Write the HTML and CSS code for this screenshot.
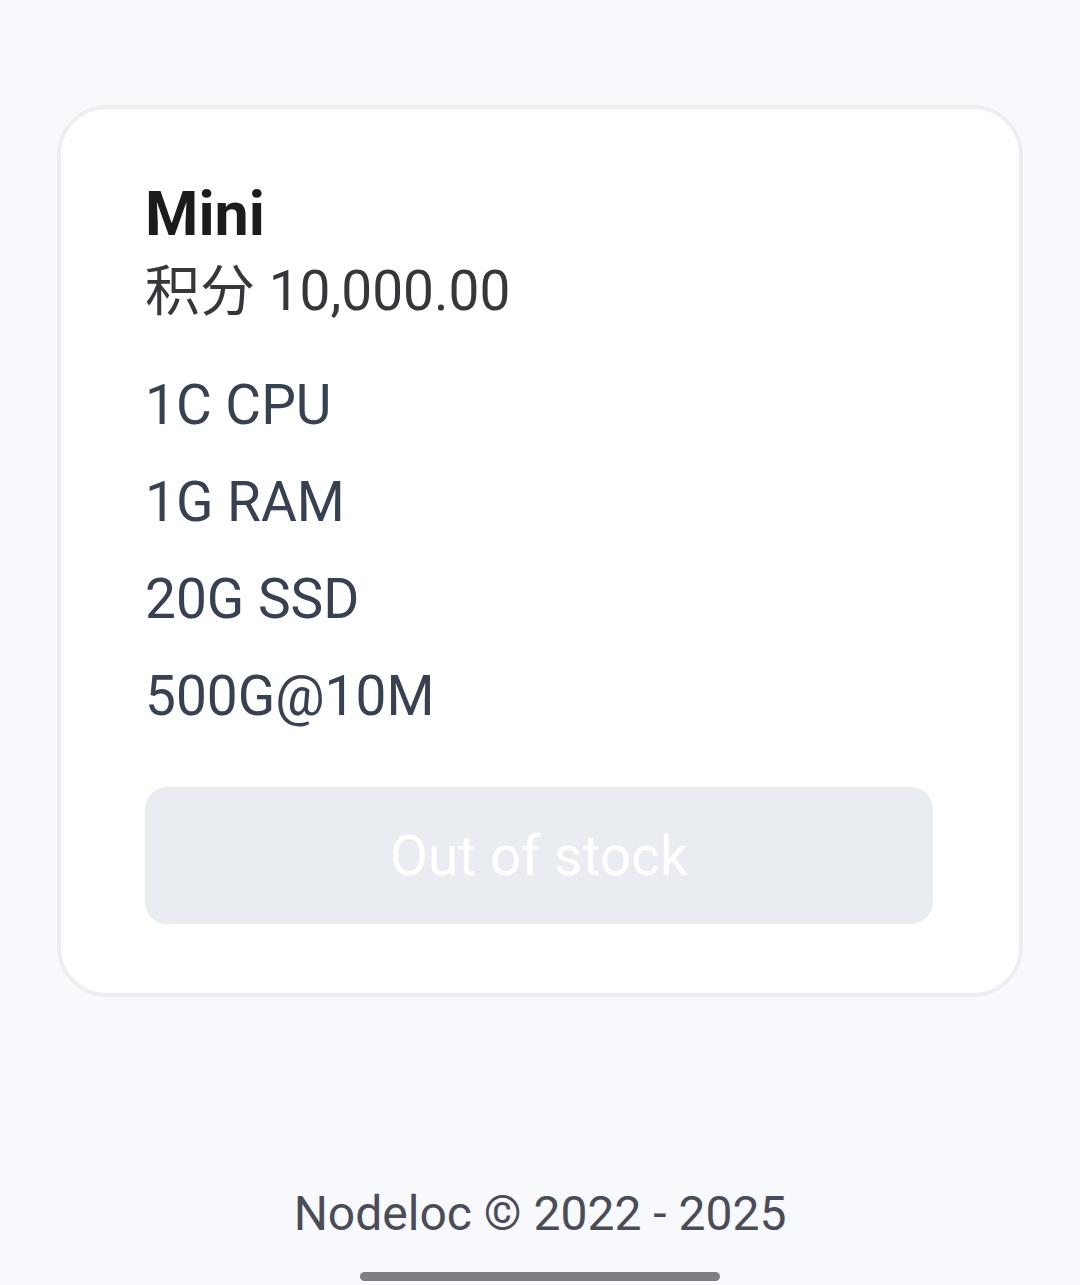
FILE: index.html
```html
<!DOCTYPE html>
<html lang="zh">
<head>
<meta charset="utf-8">
<title>Mini</title>
<link rel="stylesheet" href="styles.css">
</head>
<body>
<main class="page">
  <section class="card">
    <h2 class="plan-name">Mini</h2>
    <p class="plan-price">积分 10,000.00</p>
    <ul class="specs">
      <li>1C CPU</li>
      <li>1G RAM</li>
      <li>20G SSD</li>
      <li>500G@10M</li>
    </ul>
    <button class="btn-disabled" disabled>Out of stock</button>
  </section>
</main>
<footer class="footer">Nodeloc © 2022 - 2025</footer>
<div class="home-indicator"></div>
</body>
</html>
```

FILE: styles.css
```css
html, body {
  margin: 0;
  padding: 0;
}
body {
  background: #f8f9fc;
  font-family: Roboto, "Noto Sans CJK SC", sans-serif;
  width: 1080px;
  height: 1285px;
  position: relative;
  overflow: hidden;
}
.page {
  padding: 105px 57px 0 57px;
}
.card {
  background: #ffffff;
  border: 4px solid #eceef2;
  border-radius: 50px;
  padding: 67px 86px 69px 84px;
  box-sizing: border-box;
}
.plan-name {
  margin: 0;
  font-size: 61px;
  line-height: 76px;
  font-weight: 700;
  color: #1c1c1f;
}
.plan-price {
  margin: 0;
  font-size: 55px;
  line-height: 78px;
  color: #36373b;
}
.specs {
  list-style: none;
  margin: 27px 0 0 0;
  padding: 0;
}
.specs li {
  font-size: 55px;
  line-height: 97px;
  color: #374151;
}
.btn-disabled {
  display: flex;
  align-items: center;
  justify-content: center;
  width: 100%;
  height: 137px;
  margin-top: 42px;
  border: none;
  border-radius: 22px;
  background: #e9ecf0;
  color: #ffffff;
  font-family: Roboto, sans-serif;
  font-size: 55px;
  padding: 0;
}
.footer {
  text-align: center;
  font-size: 48px;
  color: #4a4d59;
  margin-top: 187px;
  line-height: 60px;
}
.home-indicator {
  position: absolute;
  left: 360px;
  top: 1272px;
  width: 360px;
  height: 9px;
  border-radius: 5px;
  background: #7d7e83;
}
```
